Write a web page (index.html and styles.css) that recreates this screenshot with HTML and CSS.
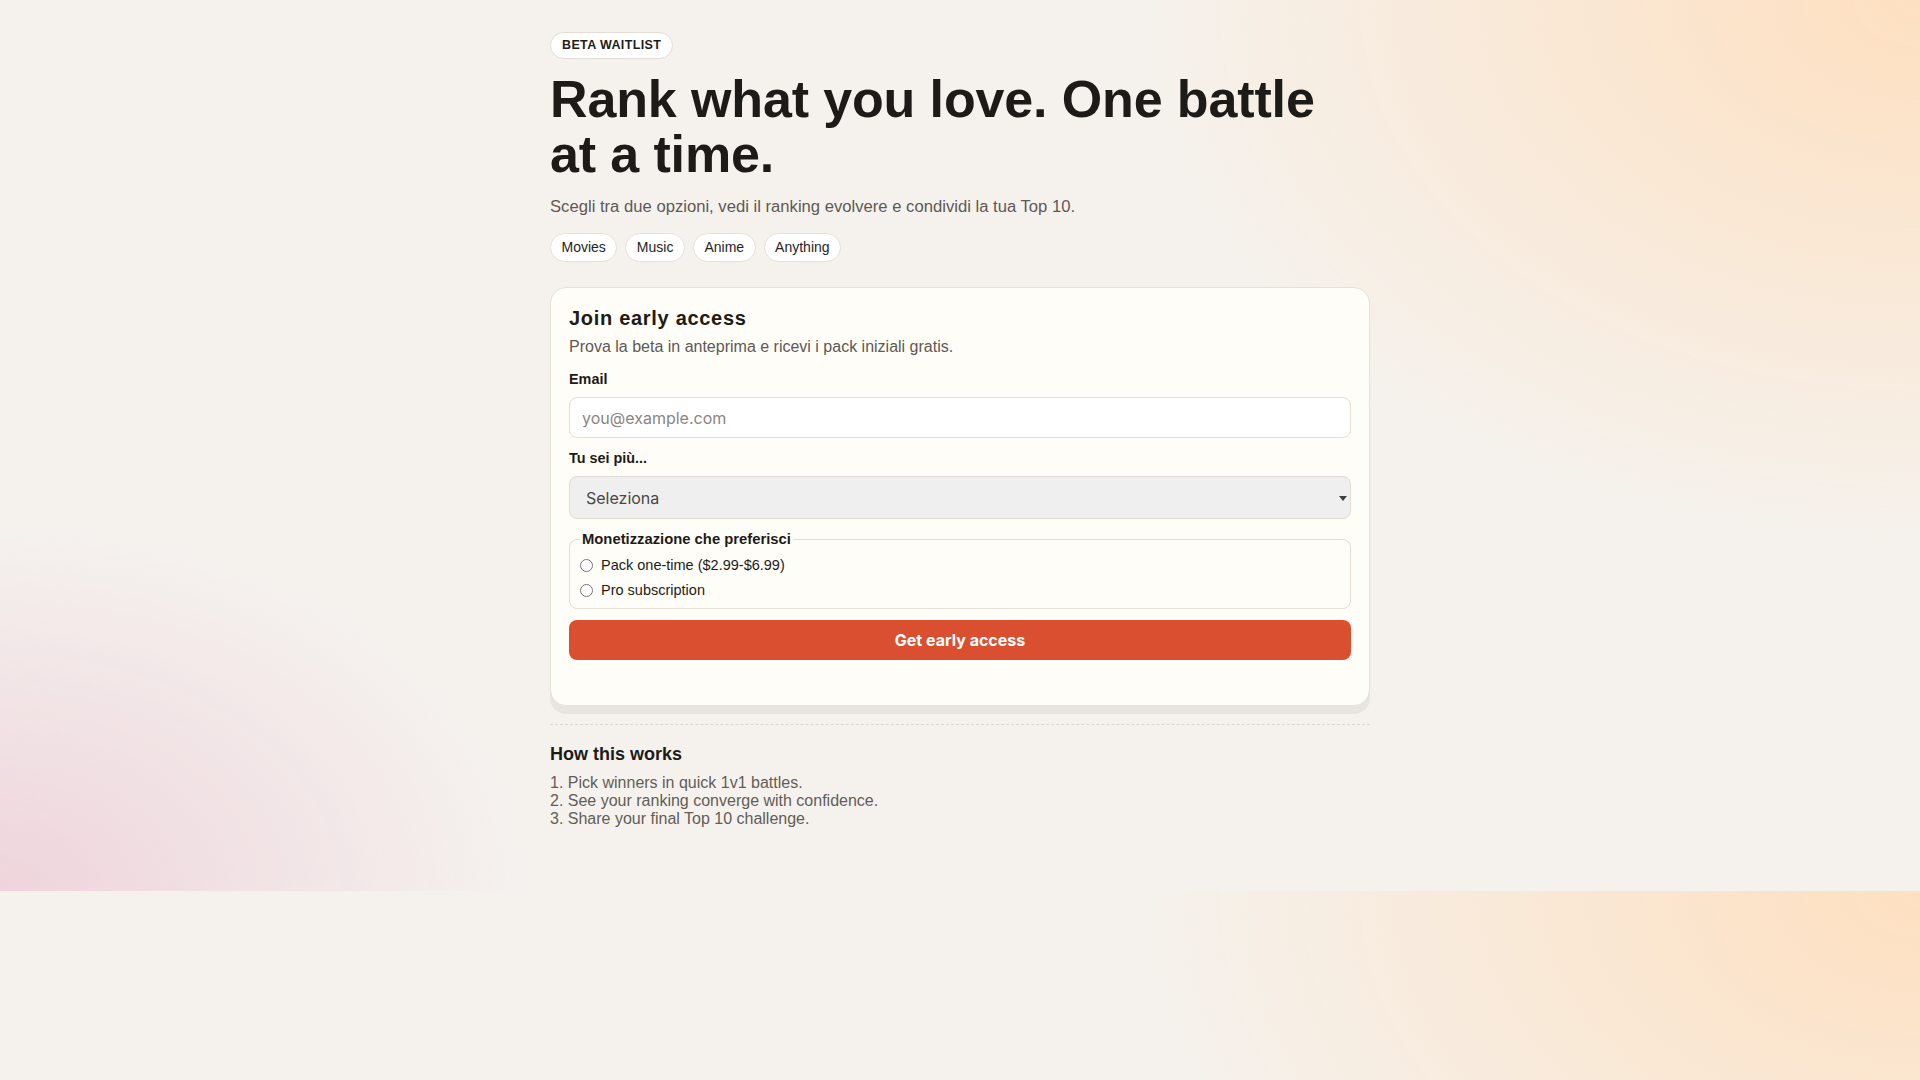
FILE: index.html
```html
<!DOCTYPE html>
<html lang="it">
<head>
<meta charset="utf-8">
<title>Beta waitlist</title>
<link rel="stylesheet" href="styles.css">
</head>
<body>
<main class="page">
  <span class="badge">BETA WAITLIST</span>
  <h1 class="title">Rank what you love. One battle at a time.</h1>
  <p class="lead">Scegli tra due opzioni, vedi il ranking evolvere e condividi la tua Top 10.</p>
  <ul class="chips">
    <li class="chip">Movies</li>
    <li class="chip">Music</li>
    <li class="chip">Anime</li>
    <li class="chip">Anything</li>
  </ul>

  <section class="card">
    <h2 class="card-title">Join early access</h2>
    <p class="card-desc">Prova la beta in anteprima e ricevi i pack iniziali gratis.</p>
    <form class="form">
      <label class="field-label" for="email">Email</label>
      <input id="email" class="input" type="email" placeholder="you@example.com">
      <label class="field-label" for="kind">Tu sei più...</label>
      <div class="select-wrap">
        <select id="kind" class="select">
          <option>Seleziona</option>
        </select>
      </div>
      <fieldset class="choice">
        <legend class="choice-legend">Monetizzazione che preferisci</legend>
        <div class="options">
          <label class="option"><input class="radio" type="radio" name="plan"> Pack one-time ($2.99-$6.99)</label>
          <label class="option"><input class="radio" type="radio" name="plan"> Pro subscription</label>
        </div>
      </fieldset>
      <button class="cta" type="button">Get early access</button>
      <p class="status"></p>
    </form>
  </section>

  <hr class="divider">

  <section class="how">
    <h3 class="how-title">How this works</h3>
    <ol class="steps">
      <li>Pick winners in quick 1v1 battles.</li>
      <li>See your ranking converge with confidence.</li>
      <li>Share your final Top 10 challenge.</li>
    </ol>
  </section>
</main>
</body>
</html>
```

FILE: styles.css
```css
* {
  box-sizing: border-box;
}

body {
  margin: 0;
  font-family: "Liberation Sans", Arial, sans-serif;
  color: #1d1b18;
  background:
    radial-gradient(ellipse 60% 90% at 100% 0%, rgba(255, 221, 186, 0.88), rgba(255, 221, 186, 0) 70%),
    radial-gradient(ellipse 40% 60% at 0% 100%, rgba(238, 211, 219, 0.95), rgba(238, 211, 219, 0) 70%),
    #f5f2ee;
}

.page {
  width: 820px;
  margin: 0 auto;
  padding: 32px 0 63px;
}

.badge {
  display: block;
  width: fit-content;
  padding: 5px 11px;
  border: 1px solid #e4ddd4;
  border-radius: 999px;
  background: #ffffff;
  font-size: 12.5px;
  line-height: 15px;
  font-weight: 700;
  letter-spacing: 0.03em;
  color: #1f1d1a;
}

.title {
  margin: 13px 0 0;
  font-size: 52px;
  line-height: 1.05;
  font-weight: 700;
  letter-spacing: -0.13px;
  color: #1d1b18;
}

.lead {
  margin: 14px 0 0;
  font-size: 16.65px;
  line-height: 1.5;
  color: #5e5954;
}

.chips {
  display: flex;
  gap: 8px;
  margin: 13px 0 0;
  padding: 0;
  list-style: none;
}

.chip {
  padding: 5px 10.5px;
  border: 1px solid #e6e0d8;
  border-radius: 999px;
  background: #ffffff;
  font-size: 14px;
  line-height: 17px;
  color: #26231f;
}

.card {
  margin-top: 25px;
  padding: 18px;
  border: 1px solid #e6e0d7;
  border-radius: 16px;
  background: #fffdf8;
  box-shadow: 0 8px 0 #e8e4df;
}

.card-title {
  margin: 0;
  font-size: 20px;
  line-height: 24px;
  font-weight: 700;
  letter-spacing: 0.035em;
  color: #1d1b18;
}

.card-desc {
  margin: 5px 0 0;
  font-size: 16px;
  line-height: 24px;
  color: #5e5954;
}

.form {
  display: block;
}

.field-label {
  display: block;
  margin-top: 10px;
  font-size: 14.4px;
  line-height: 20px;
  font-weight: 700;
  color: #1d1b18;
}

.input {
  display: block;
  width: 100%;
  height: 41px;
  margin-top: 8px;
  padding: 0 12px;
  border: 1px solid #e3ddd4;
  border-radius: 8px;
  background: #ffffff;
  font-family: Inter, "Liberation Sans", sans-serif;
  font-size: 16px;
  color: #1d1b18;
}

.input::placeholder {
  color: #8a8580;
}

.select-wrap {
  position: relative;
  margin-top: 8px;
}

.select-wrap::after {
  content: "";
  position: absolute;
  right: 4px;
  top: 20px;
  border-left: 4.5px solid transparent;
  border-right: 4.5px solid transparent;
  border-top: 5px solid #3f3f3f;
  pointer-events: none;
}

.select {
  display: block;
  width: 100%;
  height: 43px;
  padding: 0 16px;
  border: 1px solid #e0dbd4;
  border-radius: 8px;
  background: #efefef;
  appearance: none;
  -webkit-appearance: none;
  font-family: Inter, "Liberation Sans", sans-serif;
  font-size: 16px;
  color: #4a4744;
}

.choice {
  margin: 12px 0 0;
  padding: 10px 10px 9px;
  border: 1px solid #e3ddd4;
  border-radius: 8px;
}

.choice-legend {
  padding: 0 2px;
  font-size: 14.8px;
  font-weight: 700;
  color: #1d1b18;
}

.options {
  display: flex;
  flex-direction: column;
  gap: 8px;
}

.option {
  display: flex;
  align-items: center;
  gap: 8px;
  font-size: 14.5px;
  line-height: 17px;
  color: #1d1b18;
}

.radio {
  width: 13px;
  height: 13px;
  margin: 0;
}

.cta {
  display: block;
  width: 100%;
  height: 40px;
  margin-top: 11px;
  border: 0;
  border-radius: 8px;
  background: #d94f2f;
  font-family: Inter, "Liberation Sans", sans-serif;
  font-size: 16px;
  font-weight: 700;
  color: #ffffff;
}

.status {
  min-height: 27px;
  margin: 0;
}

.divider {
  margin: 18px 0 0;
  border: 0;
  border-top: 1px dashed #ddd6ce;
}

.how-title {
  margin: 18px 0 0;
  font-size: 18px;
  line-height: 1.3;
  font-weight: 700;
  color: #1d1b18;
}

.steps {
  margin: 7px 0 0;
  padding: 0;
  list-style: decimal inside;
  font-size: 16px;
  line-height: normal;
  color: #625d57;
}
```
